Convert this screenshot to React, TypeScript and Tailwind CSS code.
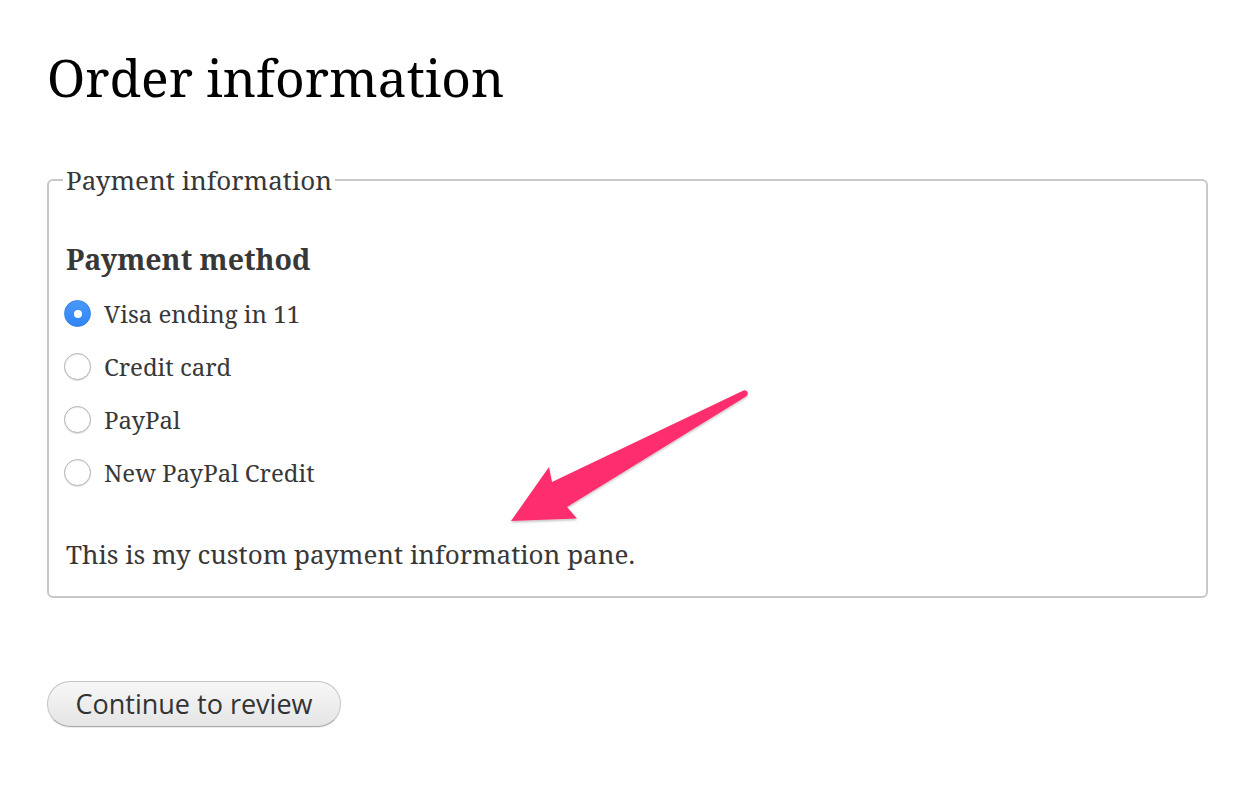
import React from "react";

const serif = "font-['Noto_Serif','DejaVu_Serif',serif]";

function Radio({ checked, label }: { checked?: boolean; label: string }) {
  return (
    <label className="flex items-center h-[53px] gap-[13px] -ml-[2px]">
      {checked ? (
        <span className="w-[27px] h-[27px] rounded-full bg-gradient-to-b from-[#4a97f8] to-[#2f86f5] border border-[#2f7fe6] flex items-center justify-center shrink-0">
          <span className="w-[8px] h-[8px] rounded-full bg-white" />
        </span>
      ) : (
        <span className="w-[27px] h-[27px] rounded-full bg-white border border-[#b4b4b4] shadow-[inset_0_1px_1px_rgba(0,0,0,0.08),0_1px_1px_rgba(0,0,0,0.12)] shrink-0" />
      )}
      <span className="text-[24px] leading-[53px] text-[#383838]">{label}</span>
    </label>
  );
}

export default function App() {
  return (
    <div className={`relative w-[1244px] h-[786px] bg-white ${serif}`}>
      <div className="flex flex-col items-start pl-[47px] pt-[47px]">
        <h1 className="text-[51.5px] leading-[60px] text-black font-normal">Order information</h1>

        <fieldset className="mt-[58px] w-[1161px] border-2 border-[#c8c8c8] rounded-[6px] pl-[17px] pr-[17px] pb-[24px]">
          <legend className="-ml-[3px] px-[3px] text-[26px] leading-[30px] text-[#383838]">Payment information</legend>
          <div className="flex flex-col pt-[46px]">
            <div className="text-[28.5px] leading-[36px] font-bold text-[#383838]">Payment method</div>
            <div className="flex flex-col mt-[10px]">
              <Radio checked label="Visa ending in 11" />
              <Radio label="Credit card" />
              <Radio label="PayPal" />
              <Radio label="New PayPal Credit" />
            </div>
            <p className="mt-[37px] text-[26px] leading-[36px] text-[#383838]">This is my custom payment information pane.</p>
          </div>
        </fieldset>

        <button className="mt-[83px] w-[294px] h-[46px] rounded-full border border-[#c4c4c4] border-b-[#a8a8a8] bg-gradient-to-b from-[#f7f7f7] to-[#e5e5e5] shadow-[0_1px_1px_rgba(0,0,0,0.08)] font-['Open_Sans',sans-serif] text-[27px] leading-[44px] text-[#333] flex items-center justify-center">
          Continue to review
        </button>
      </div>

      <svg className="absolute left-0 top-0 pointer-events-none" width="1244" height="786" viewBox="0 0 1244 786">
        <defs>
          <filter id="sh" x="-10%" y="-10%" width="120%" height="130%">
            <feDropShadow dx="0" dy="1.5" stdDeviation="1.2" floodColor="#000" floodOpacity="0.25" />
          </filter>
        </defs>
        <path
          d="M743.5 390.5 Q746 389.5 747.5 392 Q748.5 395 746 396.5 L567 507 L577 518.5 L511 521 L549 467 L552 482 Z"
          fill="#fe2f6e"
          filter="url(#sh)"
        />
      </svg>
    </div>
  );
}
